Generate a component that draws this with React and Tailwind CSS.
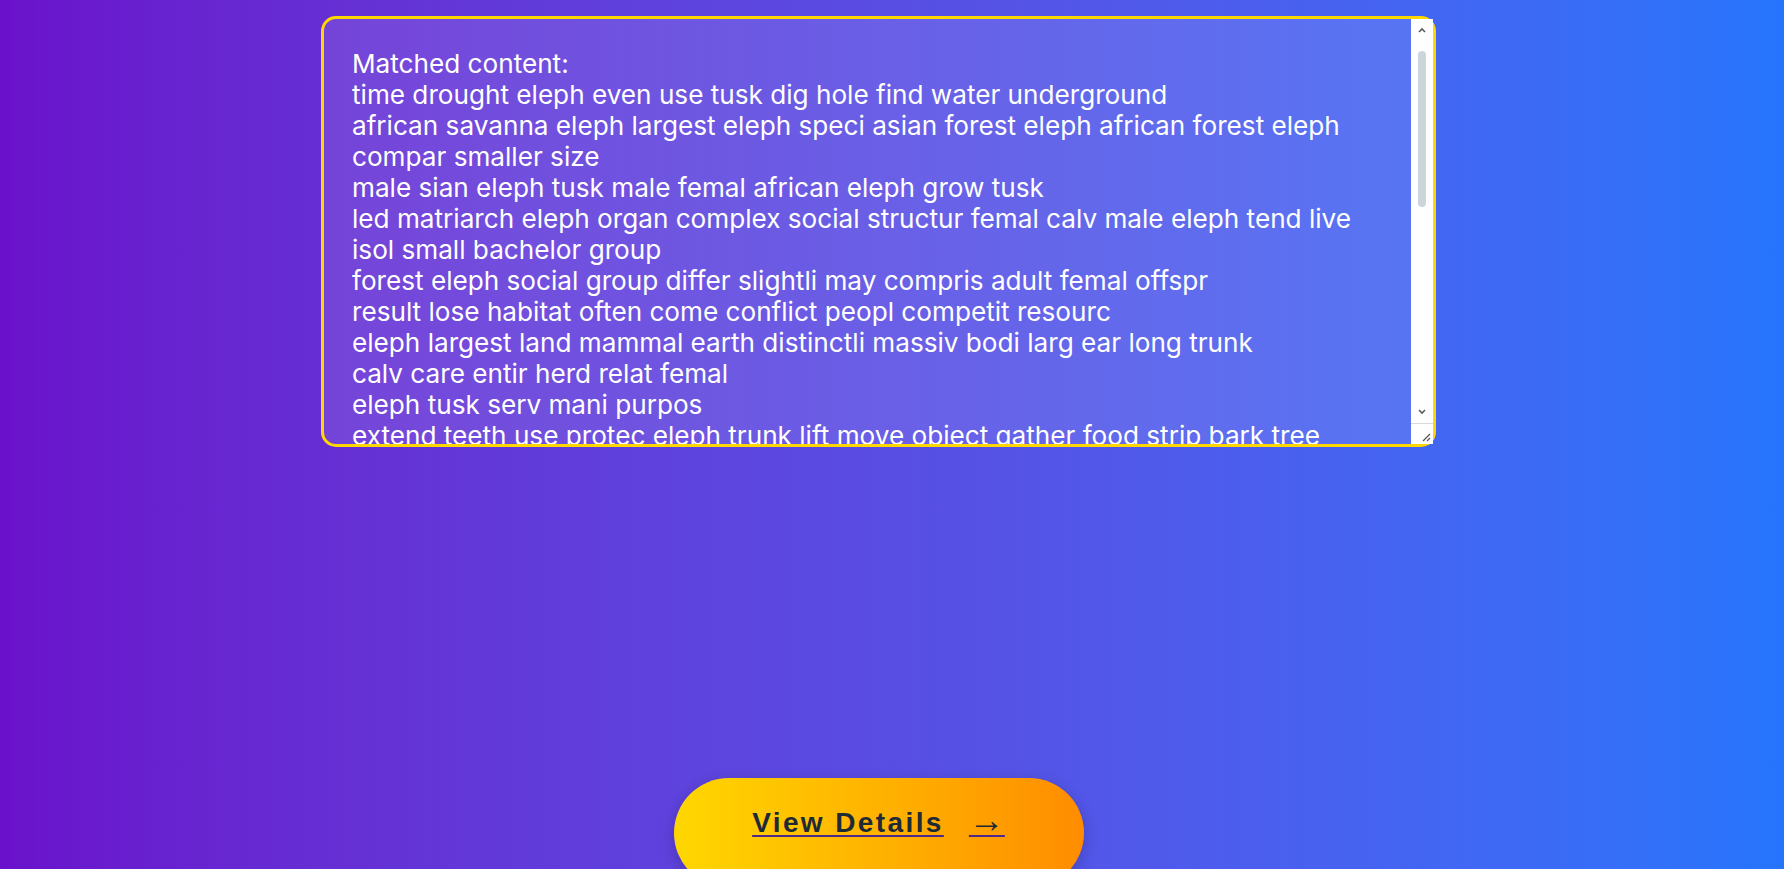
import React from "react";

const matched = [
    "Matched content:",
    "time drought eleph even use tusk dig hole find water underground",
    "african savanna eleph largest eleph speci asian forest eleph african forest eleph compar smaller size",
    "male sian eleph tusk male femal african eleph grow tusk",
    "led matriarch eleph organ complex social structur femal calv male eleph tend live isol small bachelor group",
    "forest eleph social group differ slightli may compris adult femal offspr",
    "result lose habitat often come conflict peopl competit resourc",
    "eleph largest land mammal earth distinctli massiv bodi larg ear long trunk",
    "calv care entir herd relat femal",
    "eleph tusk serv mani purpos",
    "extend teeth use protec eleph trunk lift move object gather food strip bark tree",
    "asian eleph smaller ear african eleph round back",
    "eleph herbivor eat grass leav bark fruit root",
    "adult eleph eat 150 kg food day",
    "eleph commun rumbl trumpet low frequenc sound travel long distanc",
    "poach ivori major threat eleph popul",
    "eleph known intellig memori emot",
    "gestat period eleph nearli 22 month",
    "conserv effort protect eleph habitat reduc poach",
    "eleph play import role ecosystem creat water hole clear forest",
    "eleph live 60 70 year wild",
    "herd migrat season search food water",
    "eleph skin thick sensit sun use mud dust protect",
    "african eleph found sub saharan africa",
    "asian eleph found india southeast asia",
    "eleph use trunk drink water spray bodi",
    "eleph sleep stand lie",
    "eleph mourn dead herd member",
    "eleph foot pad absorb shock",
];

const App = () => {
    return (
        <div className="h-[869px] overflow-hidden bg-gradient-to-r from-[#6a11cb] to-[#2575fc] pt-[16px] pr-[27px] flex flex-col items-center">
            <div className="relative shrink-0">
                <textarea
                    readOnly
                    value={matched.join("\n")}
                    className="block w-[1115px] h-[431px] resize-none overflow-hidden rounded-[15px] border-[3px] border-[#ffd700] bg-white/10 pl-[28px] pr-[50px] pt-[29px] pb-[20px] text-[26.15px] leading-[31px] text-white outline-none font-['Inter','Noto_Sans',sans-serif]"
                />
                {/* scrollbar overlay */}
                <div className="absolute right-[3px] top-[3px] bottom-[3px] w-[22px] bg-white pointer-events-none">
                    <svg className="absolute left-[7px] top-[8px]" width="8" height="6" viewBox="0 0 8 6">
                        <path d="M1 5 L4 2 L7 5" fill="none" stroke="#5a5a5a" strokeWidth="1.6" />
                    </svg>
                    <div className="absolute left-[7px] top-[32px] w-[8px] h-[156px] rounded-full bg-[#cdd5dc]" />
                    <svg className="absolute left-[7px] top-[390px]" width="8" height="6" viewBox="0 0 8 6">
                        <path d="M1 1 L4 4 L7 1" fill="none" stroke="#5a5a5a" strokeWidth="1.6" />
                    </svg>
                    <div className="absolute left-0 right-0 top-[404px] bottom-0 border-t border-[#d9d9d9]">
                        <svg className="absolute right-[2px] bottom-[2px]" width="10" height="10" viewBox="0 0 10 10">
                            <path d="M2 9 L9 2 M6 9 L9 6" fill="none" stroke="#555" strokeWidth="1.2" />
                        </svg>
                    </div>
                </div>
            </div>

            <button
                type="button"
                className="mt-[331px] w-[410px] shrink-0 rounded-full bg-gradient-to-r from-[#ffd700] to-[#ff8c00] pt-[24px] pb-[44px] flex justify-center items-baseline font-['Liberation_Sans',Arial,sans-serif] text-[28px] font-bold tracking-[2.4px] text-[#1e2a36] underline decoration-[#4b2a8c] decoration-2 underline-offset-[3px] shadow-[0_4px_15px_rgba(0,0,0,0.2)]"
            >
                <span>View Details </span>
                <span className="ml-[25px] font-normal tracking-normal text-[36px] leading-[32px]">→</span>
            </button>
        </div>
    );
};

export default App;
